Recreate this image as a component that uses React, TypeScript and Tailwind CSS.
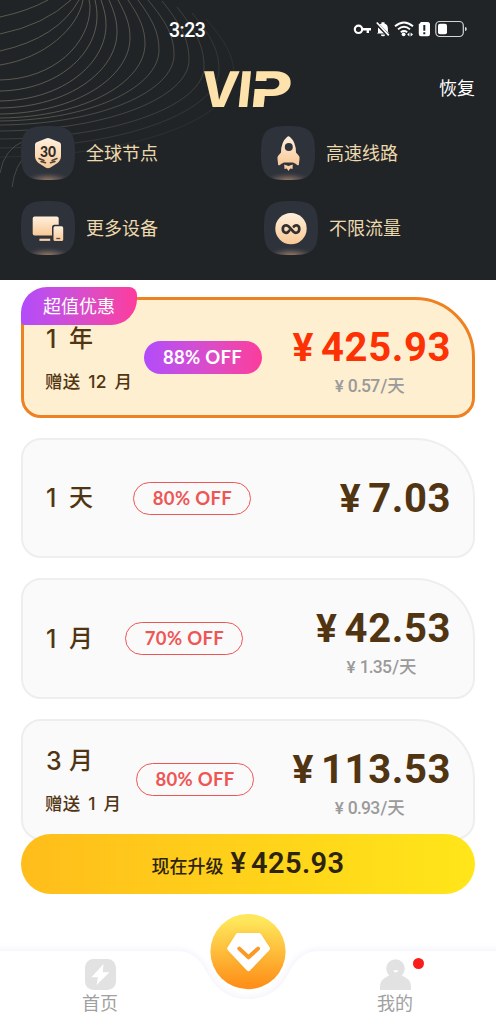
import React from "react";

const CJK = "font-['Inter','Noto_Sans_CJK_SC',sans-serif]";

const contours: number[][] = [
  // startX, startY, bulgeX, bulgeY, leftY, opacity
  [89, 0, 90, 7, 80, 0.6],
  [95, 0, 97, 16, 91, 0.62],
  [101, 0, 106, 25, 101, 0.62],
  [109, 0, 117, 32, 108, 0.6],
  [118, 0, 130, 38, 114, 0.58],
  [128, 0, 145, 44, 118, 0.55],
  [138, 0, 159, 50, 121, 0.5],
  [148, 0, 174, 55, 125, 0.45],
  [162, 1, 189, 60, 131, 0.38],
  [177, 7, 204, 67, 139, 0.3],
  [192, 13, 219, 70, 148, 0.22],
  [206, 19, 234, 76, 157, 0.14],
];

function Contours() {
  return (
    <svg className="absolute left-0 top-0" width="260" height="200" viewBox="0 0 260 200" fill="none" stroke="#8b8672" strokeWidth="0.9">
      <g opacity="0.6">
        <path d="M48 0Q28 11 0 17" />
        <path d="M71 0Q44 25 0 34" />
        <path d="M79 0Q58 38 0 51" />
        <path d="M83 0C78 28 45 58 0 65" />
      </g>
      {contours.map(([x, y, bx, by, ly, o]) => (
        <path
          key={x}
          opacity={o}
          d={`M${x} ${y}C${x + (bx - x) * 0.7} ${y + (by - y) * 0.4} ${bx} ${by - (by - y) * 0.35} ${bx} ${by}C${bx} ${by + (ly - by) * 0.5} ${bx * 0.6} ${ly - 1} 0 ${ly}`}
        />
      ))}
      <path opacity="0.4" d="M0 173Q4 149 24 141" />
      <path opacity="0.4" d="M12 187Q15 165 26 156" />
    </svg>
  );
}

function StatusIcons() {
  return (
    <svg width="114" height="18" viewBox="353 20 114 18" fill="none">
      <circle cx="358.5" cy="29.3" r="3.7" stroke="#fff" strokeWidth="2.2" />
      <path d="M362 29.3H371M367.8 29.3V33" stroke="#fff" strokeWidth="2.4" />
      <path d="M378 32.5V28.5C378 25.5 379.3 24 381.5 23.4V22.2H384.5V23.4C386.8 24 387.9 25.8 387.9 28.5V31.5L389 33.5H377ZM380.8 34.4H385.2Q385 36.3 383 36.3T380.8 34.4Z" fill="#fff" />
      <path d="M376.3 23.4L389.2 36.2" stroke="#212427" strokeWidth="3.4" />
      <path d="M376.8 22.5L388.8 35.3" stroke="#fff" strokeWidth="1.8" />
      <path d="M395 26.3Q404 18.6 413 26.3M398 29.4Q404 24.3 410 29.4M400.8 32.2Q404 29.7 407.2 32.2" stroke="#fff" strokeWidth="1.9" />
      <circle cx="403.6" cy="34.3" r="1.9" fill="#fff" />
      <path d="M407.2 34.5L409.4 32.5V36.5ZM413 34.5L410.6 32.5V36.5Z" fill="#fff" />
      <path d="M421 22H427.5Q430 22 430 24.5V34Q430 36.3 427.8 36.3H421Q418.8 36.3 418.8 34V24.5Z" fill="#fff" />
      <path d="M424.3 25V30.7M424.3 32.2V34.2" stroke="#212427" strokeWidth="2" />
      <rect x="435.8" y="21.5" width="27.5" height="15" rx="4" stroke="#d4d5d5" strokeWidth="1.2" />
      <rect x="438" y="23.7" width="9" height="10.6" rx="2" fill="#fff" />
      <path d="M465 27Q466.8 27 466.8 29T465 31Z" fill="#d4d5d5" />
    </svg>
  );
}

type IconName = "shield" | "rocket" | "devices" | "infinity";

function FeatureIcon({ name }: { name: IconName }) {
  return (
    <svg width="54" height="54" viewBox="0 0 54 54" className="shrink-0">
      <defs>
        <linearGradient id={`g-${name}`} x1="0" y1="0" x2="0" y2="1">
          <stop offset="0" stopColor="#fff0dc" />
          <stop offset="1" stopColor="#f8c896" />
        </linearGradient>
        <radialGradient id={`r-${name}`} cx="0.5" cy="1.03" r="0.5" gradientTransform="translate(0 0.63) scale(1 0.39)">
          <stop offset="0" stopColor="#b08d70" />
          <stop offset="0.5" stopColor="#77675d" stopOpacity="0.6" />
          <stop offset="1" stopColor="#30343d" stopOpacity="0" />
        </radialGradient>
      </defs>
      <path d="M0 27C0 5 5 0 27 0S54 5 54 27S49 54 27 54S0 49 0 27Z" fill="#2e323b" />
      <path d="M0 27C0 5 5 0 27 0S54 5 54 27S49 54 27 54S0 49 0 27Z" fill={`url(#r-${name})`} />
      {name === "shield" && (
        <g>
          <path d="M25 12.6Q27 11.4 29 12.6L38.5 16.2Q40 17 40 18.8V30Q40 34 36.5 37L29.5 41.4Q27 43 24.5 41.4L17.5 37Q14 34 14 30V18.8Q14 17 15.5 16.2Z" fill={`url(#g-${name})`} />
          <text x="27" y="31.3" textAnchor="middle" fontFamily="Lato, sans-serif" fontWeight="900" fontSize="15.5" fill="#302d2b" textLength="16" lengthAdjust="spacingAndGlyphs">30</text>
          <path d="M18 32.5L23 34.5M20 35.5L24.5 36.8M36 32.5L31 34.5M34 35.5L29.5 36.8" stroke="#49413b" strokeWidth="1.5" strokeLinecap="round" />
        </g>
      )}
      {name === "rocket" && (
        <g transform="translate(0.5 0)">
          <path d="M25.8 10.8Q27 9.6 28.2 10.8Q34.5 16 34.5 26.5L37.5 30Q38.3 31 38 33L37.3 39Q36 40 34.5 38L31.5 36.5H22.5L19.5 38Q18 40 16.7 39L16 33Q15.7 31 16.5 30L19.5 26.5Q19.5 16 25.8 10.8Z" fill={`url(#g-${name})`} />
          <circle cx="27.3" cy="21" r="4" fill="#30343d" />
          <path d="M22.7 38.6L27 40L31.3 38.6L31 43L28.7 42.5L27 45L25.3 42.5L23 43Z" fill="#f9cda0" />
        </g>
      )}
      {name === "devices" && (
        <g>
          <rect x="11.7" y="15.5" width="26" height="19" rx="2" fill={`url(#g-${name})`} />
          <rect x="31" y="23.8" width="12.6" height="17.8" rx="2.6" fill="#2e323b" />
          <rect x="32.5" y="25.3" width="9.7" height="14.8" rx="1.6" fill={`url(#g-${name})`} />
          <path d="M18.4 38.8H29.2" stroke="#f8cfa4" strokeWidth="2.2" />
          <path d="M35.3 37.5H39.2" stroke="#5c4c40" strokeWidth="1.3" />
        </g>
      )}
      {name === "infinity" && (
        <g>
          <circle cx="27" cy="27.6" r="15.7" fill={`url(#g-${name})`} />
          <path d="M30 25.3C32 23.2 35.5 24.2 35.5 27.8S31.8 32.6 29.7 30.5L24.8 25.2C22.8 23.1 19 24.2 19 27.8S22.5 32.6 24.5 30.5L25.3 29.6" transform="translate(-0.2 0.2)" fill="none" stroke="#34302e" strokeWidth="2.7" strokeLinecap="round" />
        </g>
      )}
    </svg>
  );
}

function Feature({ name, label }: { name: IconName; label: string }) {
  return (
    <div className="flex items-center gap-[11px]">
      <FeatureIcon name={name} />
      <span className="pt-[2px] text-[18px] leading-6 text-[#ecd9ad]">{label}</span>
    </div>
  );
}

function Yen({ className }: { className: string }) {
  return <span className={`font-['Roboto'] ${className}`}>¥</span>;
}

type Plan = { count: string; unit: string; bonus?: string; off: string; left: string; price: string; daily?: string; best?: boolean };

const plans: Plan[] = [
  { count: "1", unit: "年", bonus: "赠送 12 月", off: "88% OFF", left: "w-[98.5px]", price: "425.93", daily: "0.57", best: true },
  { count: "1", unit: "天", off: "80% OFF", left: "w-[88.4px]", price: "7.03" },
  { count: "1", unit: "月", off: "70% OFF", left: "w-[80.4px]", price: "42.53", daily: "1.35" },
  { count: "3", unit: "月", bonus: "赠送 1 月", off: "80% OFF", left: "w-[91px]", price: "113.53", daily: "0.93" },
];

function PlanCard({ plan }: { plan: Plan }) {
  return (
    <div
      className={`relative flex h-[120.7px] shrink-0 items-center rounded-[20px] rounded-tr-[60px] ${
        plan.best ? "border-[3px] border-[#ee8121] bg-[#feefd0] px-[21px]" : "border-2 border-[#eeeeee] bg-[#fafafa] px-[22px]"
      }`}
    >
      {plan.best && (
        <div className="absolute -left-[3px] -top-[13px] flex h-[38px] w-[116px] items-center justify-center rounded-bl-[4px] rounded-br-[26px] rounded-tl-[26px] rounded-tr-[8px] bg-linear-to-r from-[#b24bfb] to-[#fc3b9c] text-[18px] text-white">
          超值优惠
        </div>
      )}
      <div className={`shrink-0 whitespace-nowrap font-medium text-[#513512] ${plan.left} ${plan.bonus ? "pt-[6px]" : ""}`}>
        <div className="flex items-center gap-[9px] pl-px text-[25px] leading-[30px]">
          <span className="w-[14px]">{plan.count}</span>
          <span className="text-[24px]">{plan.unit}</span>
        </div>
        {plan.bonus && <div className="mt-[13px] text-[17.5px] leading-[30px] tracking-[0.2px] [word-spacing:3px]">{plan.bonus}</div>}
      </div>
      <div
        className={`flex h-[33px] w-[118px] shrink-0 items-center justify-center rounded-full pb-px pt-[2px] font-['Lato'] text-[18.5px] font-bold tracking-[0.3px] ${
          plan.best ? "bg-linear-to-r from-[#b24bfb] to-[#fc3b9c] text-white" : "border-[1.5px] border-[#ee5656] text-[#ee5656]"
        }`}
      >
        {plan.off}
      </div>
      <div className={`ml-auto flex flex-col items-center ${plan.daily ? "pt-[7px]" : "pt-[2px]"} ${plan.best ? "text-[#fc3205]" : "text-[#513512]"}`}>
        <div className="flex items-center whitespace-nowrap font-['Roboto'] text-[40px] font-bold leading-[48px] tracking-[0.6px]">
          <Yen className="mr-[7px] text-[39px]" />
          {plan.price}
        </div>
        {plan.daily && (
          <div className="mt-[2px] flex items-center pr-1 text-[17.5px] font-medium leading-6 text-[#9a9a9a]">
            <Yen className="mr-1 text-[17px]" />
            <span className="font-['Roboto'] tracking-[-0.8px]">{plan.daily}</span>
            <span className="ml-px font-['Roboto']">/</span>
            <span>天</span>
          </div>
        )}
      </div>
    </div>
  );
}

function TabBar() {
  return (
    <div className="relative mt-5 h-[110px] shrink-0">
      <svg className="absolute left-0 top-0" width="496" height="110" viewBox="0 914 496 110">
        <defs>
          <linearGradient id="orb" x1="0" y1="0" x2="0" y2="1">
            <stop offset="0.08" stopColor="#fee75b" />
            <stop offset="0.95" stopColor="#fe9019" />
          </linearGradient>
          <filter id="soft" x="-10%" y="-30%" width="120%" height="160%">
            <feGaussianBlur stdDeviation="4" />
          </filter>
        </defs>
        <path d="M-20 951H176C196 951 202 964 209 976C218 992 232 999 248 999S278 992 287 976C294 964 300 951 320 951H516V1050H-20Z" fill="#ececfa" filter="url(#soft)" />
        <path d="M-20 951H176C196 951 202 964 209 976C218 992 232 999 248 999S278 992 287 976C294 964 300 951 320 951H516V1050H-20Z" fill="#fff" />
        <circle cx="248" cy="951.6" r="37.6" fill="url(#orb)" />
        <path d="M238 935.5H259L267.5 948.5L248.5 968.5L229.7 948.5Z" fill="#e78010" opacity="0.35" filter="url(#soft)" />
        <path d="M238 935.5H259L267.5 948.5L248.5 968.5L229.7 948.5Z" fill="#fff" stroke="#fff" strokeWidth="5" strokeLinejoin="round" />
        <path d="M239.3 948.6L248.5 957.3L258 948.6" fill="none" stroke="#f99a24" strokeWidth="4" strokeLinecap="round" strokeLinejoin="round" />
      </svg>
      <div className="relative flex h-full items-start text-[18px] leading-6 text-[#a0a0a0]">
        <div className="ml-[70px] mt-[45px] flex w-[60px] flex-col items-center gap-[2px]">
          <svg width="31" height="31" viewBox="0 0 31 31">
            <rect width="31" height="31" rx="8.5" fill="#e2e2e2" />
            <path d="M18.5 5L6.5 18.2H13L11.5 26L24.5 13.3H17.7Z" fill="#fff" />
          </svg>
          <span>首页</span>
        </div>
        <div className="relative ml-auto mr-[71px] mt-[45px] flex w-[60px] flex-col items-center gap-[2px]">
          <svg width="31" height="31" viewBox="0 0 31 31">
            <circle cx="15.5" cy="9.6" r="9.3" fill="#e2e2e2" />
            <path d="M0 31V28C0 21 4.5 18.5 9.5 16.5H21.5C26.5 18.5 31 21 31 28V31Z" fill="#e2e2e2" />
            <path d="M13.3 11.2H18.3Q17.8 13.4 15.8 13.4T13.3 11.2Z" fill="#fff" />
          </svg>
          <span>我的</span>
          <span className="absolute -top-px right-[1px] size-[11px] rounded-full bg-[#f91d1b]" />
        </div>
      </div>
    </div>
  );
}

export default function App() {
  return (
    <div className={`flex h-[1024px] w-[496px] flex-col overflow-hidden bg-white ${CJK}`}>
      <header className="relative h-[280px] shrink-0 bg-[#212427]">
        <Contours />
        <div className="relative flex h-full flex-col">
          <div className="flex h-[58px] items-center pl-[169px] pr-[29px]">
            <span className="mt-[3px] font-['Roboto'] text-[19.5px] font-medium tracking-[-0.5px] text-white">3:23</span>
            <div className="ml-auto">
              <StatusIcons />
            </div>
          </div>
          <div className="flex h-[60px] items-center justify-between pl-[201px] pr-[21px]">
            <div className="relative translate-y-[2px] -skew-x-6 font-['Inter'] text-[49px] font-extrabold leading-[60px] text-[#fee2ac]">
              <span className="-mr-px">V</span>
              <span>I</span>
              <span className="-ml-px inline-block origin-left scale-x-[1.28]">P</span>
              <span className="absolute left-[50px] top-[21px] h-[8px] w-[16px] bg-[#212427]" />
            </div>
            <span className="pt-px text-[18px] text-white">恢复</span>
          </div>
          <div className="mt-2 flex">
            <div className="w-[240px] pl-[21px]"><Feature name="shield" label="全球节点" /></div>
            <div className="pl-[21px]"><Feature name="rocket" label="高速线路" /></div>
          </div>
          <div className="mt-[21px] flex">
            <div className="w-[240px] pl-[21px]"><Feature name="devices" label="更多设备" /></div>
            <div className="pl-[24px]"><Feature name="infinity" label="不限流量" /></div>
          </div>
        </div>
      </header>
      <main className="flex shrink-0 flex-col gap-5 px-[21px] pt-[17px]">
        {plans.map((plan) => (
          <PlanCard key={plan.price} plan={plan} />
        ))}
      </main>
      <div className="relative -mt-[6px] shrink-0 px-[21px]">
        <button className="flex h-[60px] w-full items-center justify-center rounded-full bg-linear-to-r from-[#ffbd1b] to-[#ffe619] font-medium text-[#2c2411]">
          <span className="mt-[6px] text-[18px]">现在升级</span>
          <Yen className="ml-[7px] mr-[5px] text-[29px] font-semibold" />
          <span className="font-['Roboto'] text-[29px] font-semibold tracking-[0.4px]">425.93</span>
        </button>
      </div>
      <TabBar />
    </div>
  );
}
